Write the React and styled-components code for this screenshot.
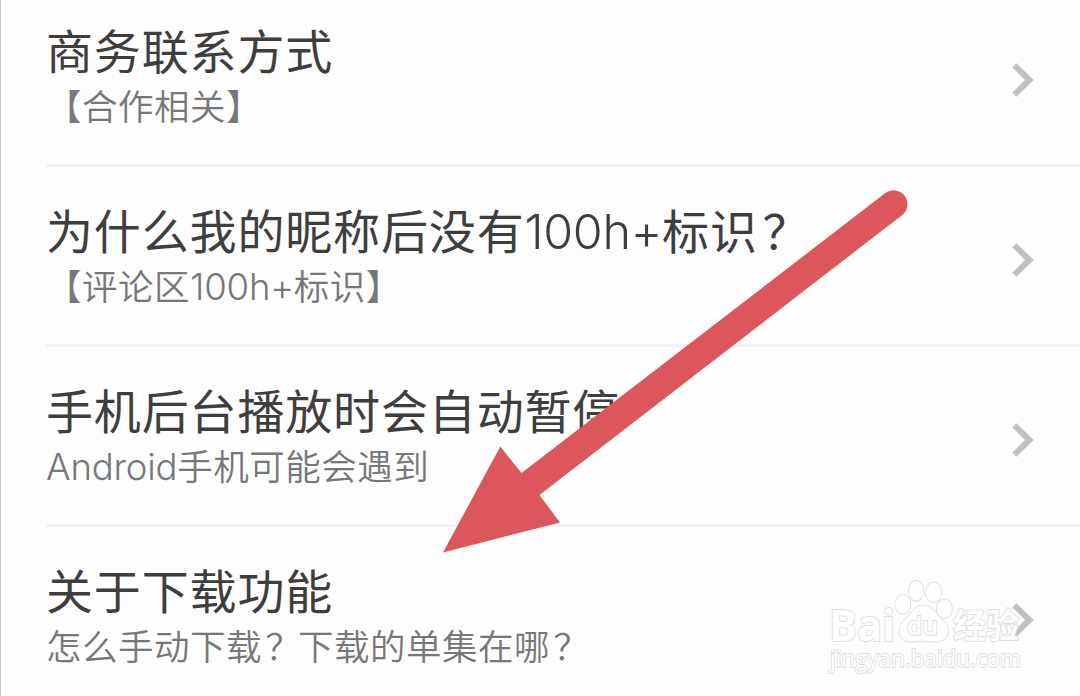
import styled, { createGlobalStyle } from "styled-components";

const questions = [
    { id: 1, title: ["商务联系方式"], hint: ["【合作相关】"] },
    { id: 2, title: ["为什么我的昵称后没有", "100h+", "标识？"], hint: ["【评论区", "100h+", "标识】"] },
    { id: 3, title: ["手机后台播放时会自动暂停"], hint: ["", "Android", "手机可能会遇到"] },
    { id: 4, title: ["关于下载功能"], hint: ["怎么手动下载？下载的单集在哪？"] },
];

// the full-width question mark sits too far left in its box
function Chinese ( {text = ""} ) {
    return text.split(/(？)/).map( (part, index) => part === "？" ? <Mark key={index}>{part}</Mark> : part );
}

function Mixed ( {parts} ) {
    const [before, latin, after] = parts;

    return (
        <>
            <Chinese text={before} />
            {latin && <Latin>{latin}</Latin>}
            <Chinese text={after} />
        </>
    );
}

function Question ( {question} ) {
    return (
        <Row>
            <Texts>
                <Title><Mixed parts={question.title} /></Title>
                <Hint><Mixed parts={question.hint} /></Hint>
            </Texts>
            <Chevron viewBox="0 0 24 36">
                <path d="M3.3 3.3 L18.5 18 L3.3 32.7" />
            </Chevron>
        </Row>
    );
}

function Arrow () {
    return (
        <ArrowSvg viewBox="0 0 470 368">
            <path d="M463 26.2 A13.8 13.8 0 0 0 446.3 4.1 L82.5 284 L61.3 257.5 L4 363.5 L121 333.5 L100.5 306 Z" />
        </ArrowSvg>
    );
}

function Watermark () {
    return (
        <WatermarkSvg viewBox="0 0 210 100">
            <text x="3" y="64.5" fontSize="43" fontWeight="700" textLength="66" lengthAdjust="spacingAndGlyphs">Bai</text>
            <ellipse cx="76.8" cy="28.5" rx="7.6" ry="9.6" />
            <ellipse cx="90.3" cy="14.8" rx="7.2" ry="10" />
            <ellipse cx="107.6" cy="16.3" rx="7.6" ry="9.7" />
            <ellipse cx="118.4" cy="32.7" rx="7.6" ry="9.2" />
            <path d="M97 29.5 C90 29.5 87 35 82.5 40 C78 44.5 73.5 48 73.5 56 C73.5 62 78 65.5 84 65.5 C89 65.5 92 64.5 97 64.5 C102 64.5 106 65.8 111 65.5 C117 65 122 61.5 122 55 C122 48 116 44 112 39.5 C107.5 34.5 104 29.5 97 29.5 Z" />
            <text x="81" y="59" fontSize="26" fontWeight="600" textLength="31" lengthAdjust="spacingAndGlyphs">du</text>
            <text x="127" y="61.5" fontSize="34" fontWeight="700" textLength="66" lengthAdjust="spacingAndGlyphs">经验</text>
            <text x="4" y="90.5" fontSize="23" fontWeight="400" textLength="191" lengthAdjust="spacingAndGlyphs">jingyan.baidu.com</text>
        </WatermarkSvg>
    );
}

export default function App() {
    return (
        <Page>
            <GlobalStyle />
            <List>
                {questions.map( (question) => <Question key={question.id} question={question} /> )}
            </List>
            <Arrow />
            <Watermark />
        </Page>
    );
}

const GlobalStyle = createGlobalStyle`
    * {
        box-sizing: border-box;
        margin: 0;
        padding: 0;
    }

    body {
        background: #fdfdfd;
    }
`
const Page = styled.div`
    position: relative;
    width: 1080px;
    height: 696px;
    overflow: hidden;
    border-left: 1px solid #c6c6c6;
    background: #fdfdfd;
    font-family: 'Noto Sans CJK SC', sans-serif;
`
const List = styled.div`
    display: flex;
    flex-direction: column;
    margin-top: -13px;
    padding-left: 45px;
`
const Row = styled.div`
    display: flex;
    align-items: flex-start;
    justify-content: space-between;
    flex-shrink: 0;
    height: 180px;
    padding: 33px 45px 0 0;
    border-bottom: 3px solid #f3f3f3;
`
const Texts = styled.div`
    display: flex;
    flex-direction: column;
    white-space: nowrap;
`
const Latin = styled.span`
    font-family: Inter, sans-serif;
    font-size: 1.03em;
    font-weight: 350;
    letter-spacing: -0.006em;
`
const Mark = styled.span`
    margin-left: 0.1em;
    margin-right: -0.1em;
`
const Title = styled.h1`
    height: 59px;
    font-size: 47px;
    font-weight: 400;
    line-height: 58px;
    letter-spacing: 0.85px;
    color: #3e3e3e;
`
const Hint = styled.p`
    height: 50px;
    font-size: 35.5px;
    font-weight: 350;
    line-height: 51px;
    letter-spacing: 0.5px;
    color: #777777;
`
const Chevron = styled.svg`
    width: 24px;
    height: 36px;
    margin-top: 42px;
    fill: none;
    stroke: #c0c0c2;
    stroke-width: 6;
`
const ArrowSvg = styled.svg`
    position: absolute;
    left: 438px;
    top: 189px;
    width: 470px;
    height: 368px;
    fill: #dc575b;
`
const WatermarkSvg = styled.svg`
    position: absolute;
    left: 825px;
    top: 576px;
    width: 210px;
    height: 100px;
    font-family: 'Open Sans', 'Noto Sans CJK SC', sans-serif;
    fill: #fefefe;
    stroke: #dedede;
    stroke-width: 1.8;
    paint-order: stroke;
`
